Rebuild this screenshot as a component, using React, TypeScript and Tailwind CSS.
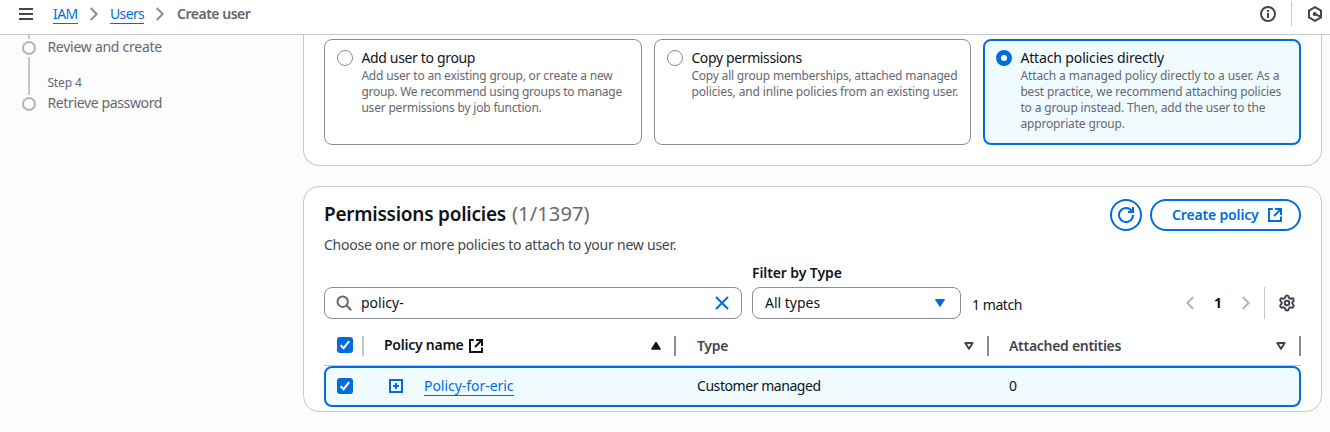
import type { ReactNode } from "react";
import { Settings } from "lucide-react";

function ExternalIcon() {
  return (
    <svg width="16" height="16" viewBox="0 0 16 16" fill="none" stroke="currentColor" strokeWidth="2">
      <path d="M5.8 2H2v12h12V9.5" />
      <path d="M8 2h6v6" />
      <path d="M14 2 7 9" />
    </svg>
  );
}

function Chevron({ className, left = false }: { className: string; left?: boolean }) {
  return (
    <svg className={className} width="16" height="16" viewBox="0 0 16 16" fill="none" stroke="currentColor" strokeWidth="2">
      <path d={left ? "M11.3 2 5.3 8l6 6" : "M4.7 2l6 6-6 6"} />
    </svg>
  );
}

function Checkbox() {
  return (
    <span className="flex size-4 items-center justify-center rounded-[3px] bg-[#006ce0]">
      <svg width="16" height="16" viewBox="0 0 16 16" fill="none" stroke="#fff" strokeWidth="2">
        <path d="M3.6 8.3l3 2.9 5.6-7" />
      </svg>
    </span>
  );
}

function Sort({ kind }: { kind: "up" | "down" }) {
  return (
    <svg width="16" height="16" viewBox="0 0 16 16">
      {kind === "up" ? (
        <path d="M8 4.6 12 11H4Z" fill="#0f141a" stroke="#0f141a" strokeWidth="1.6" strokeLinejoin="round" />
      ) : (
        <path d="M4.3 5h7.4L8 10.8Z" fill="none" stroke="#424650" strokeWidth="2" strokeLinejoin="round" />
      )}
    </svg>
  );
}

function StepDot() {
  return <span className="size-[14px] shrink-0 rounded-full border-2 border-[#b4b4bb]" />;
}

function OptionCard({ title, titleClass, selected = false, children }: { title: string; titleClass: string; selected?: boolean; children: ReactNode }) {
  return (
    <label
      className={
        selected
          ? "flex h-[106px] gap-2 rounded-lg border-2 border-[#006ce0] bg-[#f0fbff] pl-[11px] pt-[7px]"
          : "flex h-[106px] gap-2 rounded-lg border border-[#8c8c94] bg-white pl-3 pt-2"
      }
    >
      <span
        className={
          selected
            ? "mt-[2px] size-4 shrink-0 rounded-full border-[5px] border-[#006ce0] bg-white"
            : "mt-[2px] size-4 shrink-0 rounded-full border border-[#8c8c94] bg-white"
        }
      />
      <span className="flex flex-col whitespace-nowrap pl-[0.4px]">
        <span className={`text-sm leading-5 text-[#0f141a] ${titleClass}`}>{title}</span>
        <span className="text-xs leading-4 text-[#656871]">{children}</span>
      </span>
    </label>
  );
}

export default function App() {
  return (
    <div className="flex h-[432px] w-[1330px] flex-col overflow-hidden whitespace-nowrap bg-[#fcfcfd] font-['Noto_Sans',sans-serif] text-sm leading-5 text-[#0f141a]">
      <header className="flex h-[35px] shrink-0 justify-between border-b border-[#c6c6cd] bg-white">
        <div className="flex h-7 items-center pl-[18px]">
          <svg width="16" height="16" viewBox="0 0 16 16" stroke="#424650" strokeWidth="2">
            <path d="M1 3h14M1 8h14M1 13h14" />
          </svg>
          <a className="ml-[19px] mt-[2px] h-[18px] w-[25px] border-b border-[#006ce0] leading-[16px] tracking-[-0.55px] text-[#006ce0]">IAM</a>
          <Chevron className="ml-2 text-[#8c8c94]" />
          <a className="ml-2 mt-[2px] h-[18px] w-[34px] border-b border-[#006ce0] leading-[16px] tracking-[-0.65px] text-[#006ce0]">Users</a>
          <Chevron className="ml-2 text-[#8c8c94]" />
          <span className="ml-[9px] font-semibold tracking-[-0.49px] text-[#656871]">Create user</span>
        </div>
        <div className="flex h-7 items-center">
          <svg width="16" height="16" viewBox="0 0 16 16" fill="none" stroke="#424650" strokeWidth="2">
            <circle cx="8" cy="8" r="7" />
            <path d="M8 4v2M8 7v5" />
          </svg>
          <span className="ml-[15px] mt-[-1px] h-[25px] w-px bg-[#c6c6cd]" />
          <svg className="ml-[15px]" width="16" height="16" viewBox="0 0 16 16" fill="none" stroke="#424650" strokeWidth="2">
            <path d="M8 1.2 14 4.6v6.8L8 14.8 2 11.4V4.6Z" />
            <circle cx="7.7" cy="8" r="2" fill="#424650" stroke="none" />
            <path d="M8 8.1l5.6 2.6" />
          </svg>
          <span className="w-[7px]" />
        </div>
      </header>

      <div className="flex min-h-0 flex-1">
        <aside className="flex w-[303px] shrink-0 gap-[11px] pl-[22px] text-[#656871]">
          <div className="flex w-[14px] flex-col items-center">
            <span className="h-1 w-0.5 bg-[#c6c6cd]" />
            <span className="h-[2px]" />
            <StepDot />
            <span className="my-[2px] h-[38px] w-0.5 bg-[#c6c6cd]" />
            <StepDot />
          </div>
          <div className="flex flex-col pl-[0.4px] pt-[2px]">
            <span className="tracking-[-0.26px]">Review and create</span>
            <span className="mt-4 text-xs leading-5 tracking-[-0.13px]">Step 4</span>
            <span className="tracking-[-0.36px]">Retrieve password</span>
          </div>
        </aside>

        <main className="flex w-[1019px] flex-col gap-5">
          <section className="grid h-[131px] shrink-0 grid-cols-[318px_317px_318px] content-start gap-3 rounded-b-2xl border border-t-0 border-[#c6c6cd] bg-white px-5 pt-1">
            <OptionCard title="Add user to group" titleClass="tracking-[-0.34px]">
              <span className="block tracking-[-0.19px]">Add user to an existing group, or create a new</span>
              <span className="block tracking-[-0.25px]">group. We recommend using groups to manage</span>
              <span className="block tracking-[-0.2px]">user permissions by job function.</span>
            </OptionCard>
            <OptionCard title="Copy permissions" titleClass="tracking-[-0.37px]">
              <span className="block tracking-[-0.2px]">Copy all group memberships, attached managed</span>
              <span className="block tracking-[-0.13px]">policies, and inline policies from an existing user.</span>
            </OptionCard>
            <OptionCard title="Attach policies directly" titleClass="tracking-[-0.14px]" selected>
              <span className="block tracking-[-0.09px]">Attach a managed policy directly to a user. As a</span>
              <span className="block tracking-[-0.15px]">best practice, we recommend attaching policies</span>
              <span className="block tracking-[-0.15px]">to a group instead. Then, add the user to the</span>
              <span className="block tracking-[-0.15px]">appropriate group.</span>
            </OptionCard>
          </section>

          <section className="flex h-[226px] shrink-0 flex-col rounded-2xl border border-[#c6c6cd] bg-white px-5">
            <div className="flex justify-between pt-3">
              <div>
                <h2 className="flex h-[30px] items-center text-[19px] font-semibold tracking-[-0.24px]">
                  Permissions policies
                  <span className="ml-[6px] text-xl font-normal tracking-[0.15px] text-[#656871]">(1/1397)</span>
                </h2>
                <p className="mt-[6px] tracking-[-0.23px] text-[#424650]">Choose one or more policies to attach to your new user.</p>
              </div>
              <div className="flex gap-2 text-[#006ce0]">
                <button className="flex size-8 items-center justify-center rounded-full border-2 border-[#006ce0]">
                  <svg width="16" height="16" viewBox="0 0 16 16" fill="none" stroke="currentColor" strokeWidth="2">
                    <path d="M10 5h5V0" />
                    <path d="M15 8a7 7 0 1 1-.9-3.4" />
                  </svg>
                </button>
                <button className="flex h-8 w-[151px] items-center rounded-full border-2 border-[#006ce0] pl-5 font-semibold tracking-[-0.16px]">
                  <span className="w-[95px] text-left">Create policy</span>
                  <ExternalIcon />
                </button>
              </div>
            </div>

            <div className="flex items-end pt-[8px]">
              <div className="flex h-8 w-[418px] items-center rounded-lg border border-[#8c8c94] pl-[11px] pr-[11px]">
                <svg width="16" height="16" viewBox="0 0 16 16" fill="none" stroke="#656871" strokeWidth="2">
                  <circle cx="6.7" cy="6.7" r="5.2" />
                  <path d="m10.5 10.5 4.7 4.7" />
                </svg>
                <span className="ml-[9px] flex-1">policy-</span>
                <svg width="16" height="16" viewBox="0 0 16 16" fill="none" stroke="#006ce0" strokeWidth="2">
                  <path d="m2 2 12 12M14 2 2 14" />
                </svg>
              </div>
              <div className="ml-[10px]">
                <div className="mb-1 font-semibold tracking-[-0.1px]">Filter by Type</div>
                <div className="flex h-8 w-[209px] items-center justify-between rounded-lg border border-[#8c8c94] px-3">
                  <span>All types</span>
                  <svg width="16" height="16" viewBox="0 0 16 16" fill="#006ce0" stroke="#006ce0">
                    <path d="M3.5 4.5h9L8 11.5Z" strokeLinejoin="round" />
                  </svg>
                </div>
              </div>
              <span className="mb-[4px] ml-[11px] tracking-[-0.43px]">1 match</span>
              <div className="ml-auto flex h-8 items-center">
                <Chevron left className="text-[#b4b4bb]" />
                <span className="w-[40px] text-center font-bold">1</span>
                <Chevron className="text-[#b4b4bb]" />
                <span className="ml-[10px] h-8 w-px bg-[#c6c6cd]" />
                <Settings className="ml-[13px] mr-[5px] text-[#424650]" size={18} strokeWidth={2.7} />
              </div>
            </div>

            <div className="grid h-[47px] shrink-0 grid-cols-[40px_312px_313px_312px] items-center border-b border-[#c6c6cd] pt-[7px]">
              <div className="flex h-5 items-center border-r-2 border-[#c6c6cd] pb-[2px] pl-[13px]">
                <Checkbox />
              </div>
              <div className="flex h-5 items-center border-r-2 border-[#8c8c94] pl-5 pr-[10px]">
                <span className="mb-[2px] font-semibold tracking-[-0.25px]">Policy name</span>
                <span className="ml-1"><ExternalIcon /></span>
                <span className="ml-auto"><Sort kind="up" /></span>
              </div>
              <div className="flex h-5 items-center justify-between border-r-2 border-[#8c8c94] pl-[21px] pr-[10px]">
                <span className="font-semibold tracking-[-0.32px] text-[#424650]">Type</span>
                <Sort kind="down" />
              </div>
              <div className="flex h-5 items-center justify-between border-r-2 border-[#8c8c94] pl-5 pr-[10px]">
                <span className="font-semibold tracking-[-0.29px] text-[#424650]">Attached entities</span>
                <Sort kind="down" />
              </div>
            </div>

            <div className="grid h-[41px] shrink-0 grid-cols-[38px_312px_313px_310px] items-center rounded-lg border-2 border-[#006ce0] bg-[#f0fbff] pb-[2px]">
              <div className="pl-[11px]"><Checkbox /></div>
              <div className="flex items-center pl-[25px] text-[#006ce0]">
                <svg width="14" height="14" viewBox="0 0 14 14" fill="none" stroke="currentColor" strokeWidth="2">
                  <path d="M1 1h12v12H1ZM7 4v6M4 7h6" />
                </svg>
                <a className="ml-[21px] mt-px h-[19px] border-b border-[#006ce0] leading-[18px] tracking-[-0.04px]">Policy-for-eric</a>
              </div>
              <div className="pl-[21px] tracking-[-0.44px]">Customer managed</div>
              <div className="pl-5">0</div>
            </div>
          </section>
        </main>
      </div>
    </div>
  );
}
